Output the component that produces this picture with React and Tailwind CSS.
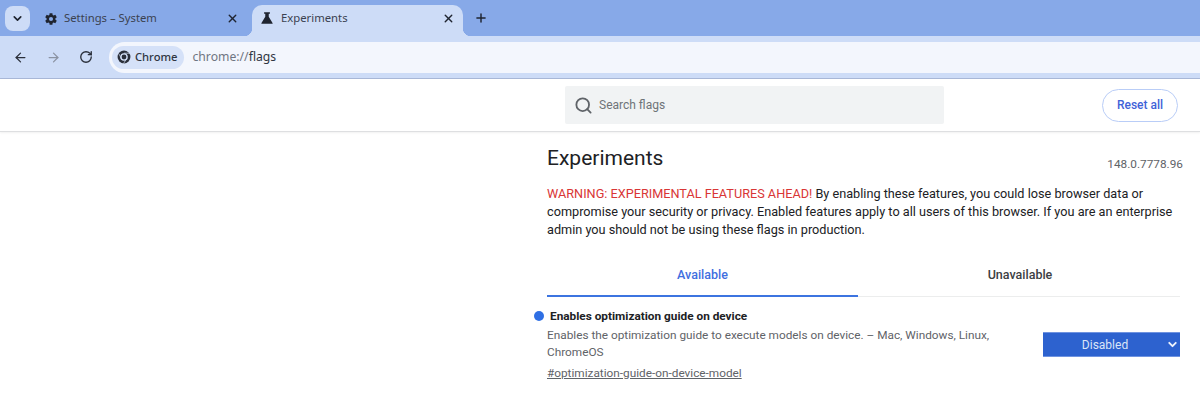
import { ArrowLeft, ArrowRight, ChevronDown, Plus, RotateCw, Search, X } from 'lucide-react'

const uiFont = { fontFamily: '"Noto Sans", sans-serif' }

function Gear() {
  return (
    <svg width="14" height="14" viewBox="0 0 24 24" fill="#1f2430">
      <path
        fillRule="evenodd"
        d="M19.4 13c.1-.3.1-.7.1-1s0-.7-.1-1l2.5-1.9-2.5-4.3-2.9 1.2c-.5-.4-1.100-.8-1.700-1L14.400 2H9.600l-.4 3c-.6.2-1.200.6-1.700 1L4.600 4.800 2.100 9.100 4.600 11c-.1.300-.1.700-.1 1s0 .7.1 1l-2.500 1.900 2.500 4.300 2.900-1.200c.5.4 1.100.8 1.700 1l.4 3h4.800l.4-3c.6-.2 1.200-.6 1.700-1l2.900 1.200 2.500-4.300L19.400 13zM12 15.500a3.500 3.500 0 1 1 0-7 3.500 3.500 0 0 1 0 7z"
      />
    </svg>
  )
}

function Flask() {
  return (
    <svg width="14" height="14" viewBox="0 0 24 24" fill="#1f2430">
      <path d="M7 2h10v2.500h-2v5.500l6.500 10.500c.5 1-.1 1.500-1 1.500H3.500c-.9 0-1.500-.5-1-1.500L9 10V4.500H7V2z" />
    </svg>
  )
}

function ChromeLogo() {
  return (
    <svg width="14" height="14" viewBox="0 0 24 24">
      <circle cx="12" cy="12" r="11" fill="#2a2f3a" />
      <circle cx="12" cy="12" r="6.500" fill="#d5e1f8" />
      <circle cx="12" cy="12" r="4.200" fill="#2a2f3a" />
      <path d="M12 5.500h9.500M8 15.500 3.500 7M16 15.500l-5 8" stroke="#d5e1f8" strokeWidth="1.200" />
    </svg>
  )
}

function TabBar() {
  return (
    <div className="flex h-[36px] items-end bg-[#87a9e8] pl-[5px]" style={uiFont}>
      <div className="mb-[5px] flex h-[25px] w-[25px] items-center justify-center rounded-[8px] bg-[#cddcf7]">
        <ChevronDown size={13} strokeWidth={3} color="#1f2430" />
      </div>
      <div className="mb-[5px] flex h-[25px] w-[222px] items-center pl-[14px] pr-[13px]">
        <Gear />
        <span className="ml-[6px] flex-1 text-[11.3px] text-[#3b4250]">Settings – System</span>
        <X size={13} strokeWidth={2.500} color="#1f2430" />
      </div>
      <div className="relative flex h-[31px] w-[211px] items-center rounded-t-[10px] bg-[#cddcf7] pb-[5px] pl-[8px] pr-[8px]">
        <span className="absolute bottom-0 left-[-8px] h-[8px] w-[8px] bg-[radial-gradient(circle_at_0_0,transparent_8px,#cddcf7_8.500px)]" />
        <span className="absolute bottom-0 right-[-8px] h-[8px] w-[8px] bg-[radial-gradient(circle_at_100%_0,transparent_8px,#cddcf7_8.500px)]" />
        <Flask />
        <span className="ml-[7px] flex-1 text-[11.3px] text-[#3b4250]">Experiments</span>
        <X size={13} strokeWidth={2.500} color="#1f2430" />
      </div>
      <div className="mb-[10px] ml-[10px] flex h-[16px] w-[16px] items-center justify-center">
        <Plus size={14} strokeWidth={2.500} color="#1f2430" />
      </div>
    </div>
  )
}

function Toolbar() {
  return (
    <div className="flex h-[43px] items-center border-b border-[#a9b8d8] bg-[#cddcf7] pl-[13px]" style={uiFont}>
      <ArrowLeft size={15} strokeWidth={2} color="#2a2f3a" />
      <ArrowRight size={15} strokeWidth={2} color="#8b93a3" className="ml-[18px]" />
      <RotateCw size={14} strokeWidth={2.300} color="#2a2f3a" className="ml-[18px]" />
      <div className="ml-[16px] flex h-[31px] flex-1 items-center rounded-l-full bg-[#f3f6fd] pl-[3px]">
        <div className="flex h-[23px] items-center rounded-full bg-[#d5e1f8] pl-[5px] pr-[7px]">
          <ChromeLogo />
          <span className="ml-[4px] text-[11.2px] font-medium text-[#2f3542]">Chrome</span>
        </div>
        <span className="ml-[8px] text-[12.2px] text-[#6f7582]">
          chrome://<span className="text-[#2f3542]">flags</span>
        </span>
      </div>
    </div>
  )
}

function FlagsHeader() {
  return (
    <div className="flex h-[53px] items-center border-b border-[#dedfe1] pl-[565px] pr-[22px] shadow-[0_1px_2px_rgba(0,0,0,0.06)]">
      <div className="flex h-[38px] w-[379px] items-center rounded-[2px] bg-[#f1f3f4] pl-[9px]">
        <Search size={19} strokeWidth={2.300} color="#5f6368" />
        <span className="ml-[6px] text-[12px] text-[#6f7378]">Search flags</span>
      </div>
      <div className="ml-auto flex h-[33px] w-[76px] items-center justify-center rounded-full border border-[#b9cdf7] text-[12px] font-medium text-[#3f63d8]">
        Reset all
      </div>
    </div>
  )
}

function FlagRow() {
  return (
    <div className="relative mt-[11px] flex items-start justify-between">
      <span className="absolute left-[-13px] top-[3px] h-[10px] w-[10px] rounded-full bg-[#2f6fe4]" />
      <div className="w-[470px]">
        <div className="h-[17px] pl-[3px] text-[11.8px] leading-[17px] font-bold text-[#202124]">
          Enables optimization guide on device
        </div>
        <p className="mt-[2px] text-[11.8px] leading-[17px] text-[#5f6368]">
          Enables the optimization guide to execute models on device. – Mac, Windows, Linux, ChromeOS
        </p>
        <div className="mt-[4px] text-[11.8px] leading-[17px] text-[#5f6368] underline">
          #optimization-guide-on-device-model
        </div>
      </div>
      <div className="relative mt-[24px] flex h-[25px] w-[137px] items-center justify-center border-y border-[#6f93e0] bg-[#2d62cf] pr-[13px] text-[12px] text-[#dbe5f8]">
        Disabled
        <ChevronDown size={13} strokeWidth={3.500} color="#eef3fc" className="absolute right-[1px] top-[5px]" />
      </div>
    </div>
  )
}

export default function App() {
  return (
    <div className="h-[402px] w-[1200px] overflow-hidden bg-white" style={{ fontFamily: 'Roboto, sans-serif' }}>
      <TabBar />
      <Toolbar />
      <FlagsHeader />
      <main className="ml-[547px] w-[633px] pt-[14px]">
        <div className="flex items-end justify-between">
          <h1 className="text-[21px] leading-[25px] font-normal text-[#202124]">Experiments</h1>
          <span className="mb-[-3px] mr-[-3px] text-[11.8px] text-[#5f6368]">148.0.7778.96</span>
        </div>
        <p className="mt-[14px] text-[12.700px] leading-[18px] text-[#202124]">
          <span className="text-[#d93636]">WARNING: EXPERIMENTAL FEATURES AHEAD!</span> By enabling these features, you
          could lose browser data or compromise your security or privacy. Enabled features apply to all users of this
          browser. If you are an enterprise admin you should not be using these flags in production.
        </p>
        <div className="mt-[17px] flex h-[41px] border-b border-[#eceded] text-[12.500px] font-medium">
          <div className="flex h-[41px] w-[311px] items-center justify-center border-b-2 border-[#3c74e0] text-[#3f6fe0]">
            Available
          </div>
          <div className="flex h-[39px] flex-1 items-center justify-center pl-[2px] text-[#3c4043]">Unavailable</div>
        </div>
        <FlagRow />
      </main>
    </div>
  )
}
